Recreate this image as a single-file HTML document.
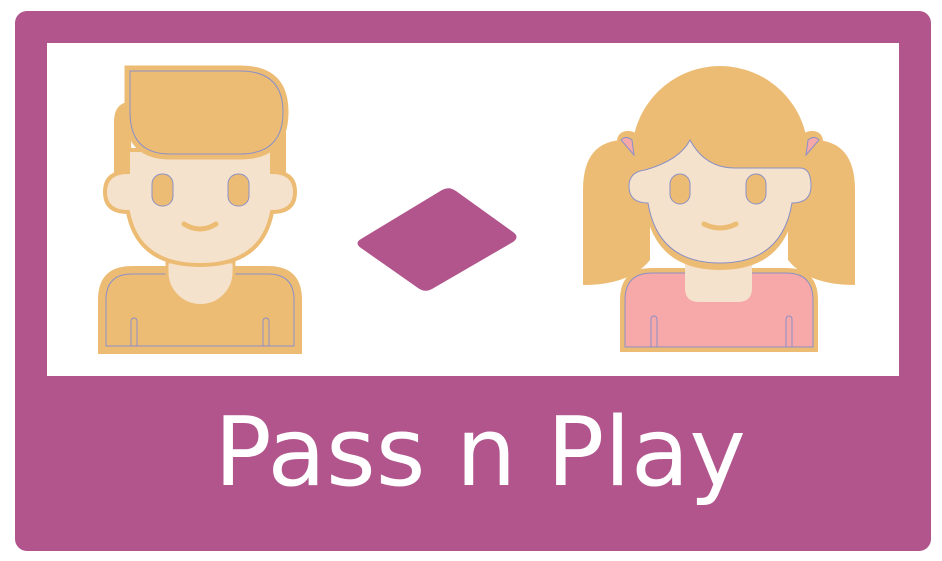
<!DOCTYPE html>
<html><head><meta charset="utf-8"><style>html,body{margin:0;padding:0;background:#fff;}svg{display:block}</style></head>
<body>
<svg width="942" height="561" viewBox="0 0 942 561" xmlns="http://www.w3.org/2000/svg">
<rect x="15" y="11" width="916" height="540" rx="12" fill="#b1558c"/>
<rect x="47" y="43" width="852" height="333" fill="#fff"/>
<text x="480" y="485" text-anchor="middle" font-family="DejaVu Sans, Liberation Sans, sans-serif" font-size="95.5" fill="#fff">Pass n Play</text>
<!-- diamond -->
<path d="M442 190 Q449 186 456 191 L513 232 Q520 237 513 242 L432 289 Q425 293 418 288 L361 248 Q354 243 361 239 Z" fill="#b1558c"/>
<!-- boy -->
<g stroke="#8a90c8" stroke-width="1">
<path d="M100 352 L100 300 Q100 268 132 268 L268 268 Q300 268 300 300 L300 352 Z" fill="#edbc74" stroke="#edbc74" stroke-width="4"/>
<path d="M106 346 L106 300 Q106 274 132 274 L268 274 Q294 274 294 300 L294 346 Z" fill="#edbc74"/>
<path d="M131 346 L131 322 Q131 318 134 318 Q137 318 137 322 L137 346 M263 346 L263 322 Q263 318 266 318 Q269 318 269 322 L269 346" fill="none"/>
<path d="M167 262 L234 262 L234 272 A33 33 0 0 1 167 272 Z" fill="#f5e2cc" stroke="#edbc74" stroke-width="3"/>
<path d="M116 122 Q116 106 128 104 L130 175 L116 175 Z M270 130 L284 128 L284 175 L270 175 Z" fill="#edbc74" stroke="#edbc74" stroke-width="4"/>
<path d="M128 150 L272 150 L272 172 Q295 172 295 192 Q295 212 272 212 Q262 265 200 265 Q138 265 128 212 Q105 212 105 192 Q105 172 128 172 Z" fill="#f5e2cc" stroke="#edbc74" stroke-width="4"/>
<path d="M126 67 L240 67 Q287 67 287 112 Q287 158 240 158 L170 158 Q126 158 126 112 Z" fill="#edbc74" stroke="#edbc74" stroke-width="3"/>
<path d="M130 71 L240 71 Q283 71 283 112 Q283 154 240 154 L170 154 Q130 154 130 112 Z" fill="none"/>
<rect x="152" y="174" width="21" height="32" rx="10" fill="#edbc74"/>
<rect x="228" y="174" width="21" height="32" rx="10" fill="#edbc74"/>
<path d="M184 224 Q200 234 216 224" fill="none" stroke="#edbc74" stroke-width="5" stroke-linecap="round"/>
</g>
<!-- girl -->
<g stroke="#8a90c8" stroke-width="1">
<path d="M583 285 L583 190 Q583 140 625 140 Q650 140 650 200 L650 260 Q630 285 583 285 Z" fill="#edbc74" stroke="none"/>
<path d="M855 285 L855 190 Q855 140 813 140 Q788 140 788 200 L788 260 Q808 285 855 285 Z" fill="#edbc74" stroke="none"/>
<path d="M620 352 L620 300 Q620 268 652 268 L786 268 Q818 268 818 300 L818 352 Z" fill="#edbc74" stroke="none"/>
<path d="M625 347 L625 300 Q625 273 652 273 L786 273 Q813 273 813 300 L813 347 Z" fill="#f7a8a8"/>
<path d="M651 347 L651 320 Q651 316 654 316 Q657 316 657 320 L657 347 M786 347 L786 320 Q786 316 789 316 Q792 316 792 320 L792 347" fill="none"/>
<path d="M685 262 L752 262 L752 288 Q752 302 738 302 L699 302 Q685 302 685 288 Z" fill="#f5e2cc" stroke="none"/>
<circle cx="720" cy="154" r="88" fill="#edbc74" stroke="none"/>
<rect x="617" y="131" width="22" height="32" rx="10" fill="#edbc74" stroke="none"/>
<rect x="801" y="131" width="22" height="32" rx="10" fill="#edbc74" stroke="none"/>
<path d="M621 140 Q626 135 632 140 L634 155 Z M819 140 Q814 135 808 140 L806 155 Z" fill="#f7a8a8"/>
<path d="M640 166 L800 166 Q814 166 814 186 Q814 207 795 207 Q785 270 720 270 Q655 270 645 207 Q626 207 626 186 Q626 166 640 166 Z" fill="#edbc74" stroke="none"/>
<path d="M645 170 Q680 160 690 140 Q705 168 735 168 L800 168 Q811 168 811 186 Q811 203 792 203 Q782 263 720 263 Q658 263 648 203 Q629 203 629 186 Q629 172 645 170 Z" fill="#f5e2cc"/>
<rect x="670" y="174" width="20" height="30" rx="10" fill="#edbc74"/>
<rect x="746" y="174" width="20" height="30" rx="10" fill="#edbc74"/>
<path d="M704 224 Q720 232 736 224" fill="none" stroke="#edbc74" stroke-width="5" stroke-linecap="round"/>
</g>
</svg>
</body></html>
